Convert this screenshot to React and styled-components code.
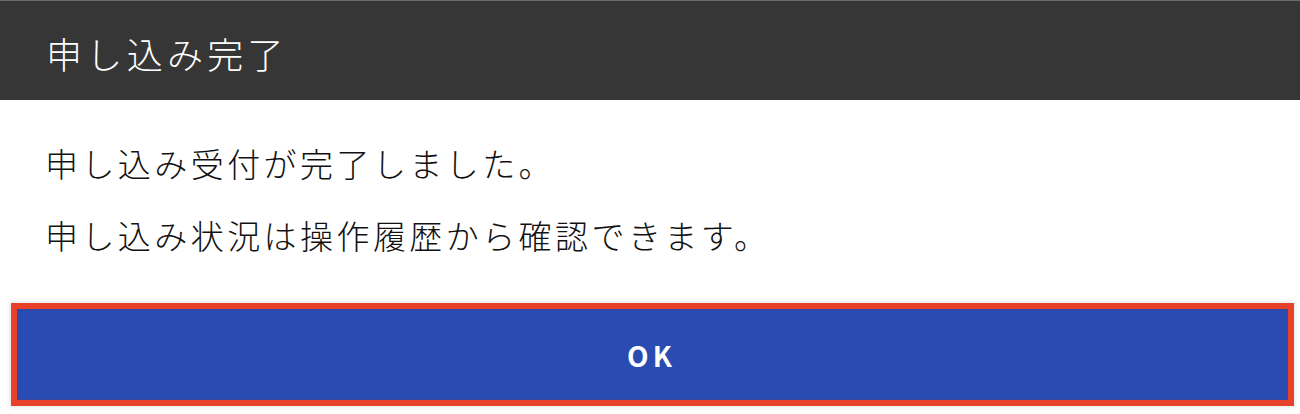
import React from 'react'
import styled, { createGlobalStyle } from 'styled-components'

const GlobalStyle = createGlobalStyle`
  html, body {
    margin: 0;
    padding: 0;
    background: #ffffff;
  }
  body {
    font-family: "Noto Sans CJK JP", "Noto Sans", sans-serif;
  }
`

const Dialog = styled.div`
  display: flex;
  flex-direction: column;
  width: 1300px;
  height: 414px;
  background: #ffffff;
  overflow: hidden;
`

const Header = styled.div`
  display: flex;
  align-items: center;
  height: 100px;
  box-sizing: border-box;
  padding: 4px 46px 0;
  background: #363636;
  border-top: 1px solid #6a6a6a;
`

const Title = styled.h1`
  margin: 0;
  font-size: 36px;
  font-weight: 300;
  letter-spacing: 0.12em;
  color: #ffffff;
`

const Body = styled.div`
  display: flex;
  flex-direction: column;
  padding: 27px 45px 0;
`

const Message = styled.p`
  margin: 0;
  font-size: 33px;
  font-weight: 300;
  line-height: 72px;
  letter-spacing: 0.104em;
  color: #111111;
`

const Actions = styled.div`
  display: flex;
  padding: 38px 12px 0 17px;
`

const OkButton = styled.button`
  flex: 1;
  height: 91px;
  border: 1px solid #3446a0;
  background: #2a4bb1;
  color: #ffffff;
  font-family: "Noto Sans CJK JP", "Noto Sans", sans-serif;
  font-size: 28px;
  font-weight: 700;
  letter-spacing: 0.15em;
  padding: 0 2px 0 0;
  cursor: pointer;
  box-shadow: 0 0 0 6px #e8412a, 0 0 5px 7px rgba(0, 0, 0, 0.12);
`

export default function App() {
  return (
    <>
      <GlobalStyle />
      <Dialog>
        <Header>
          <Title>申し込み完了</Title>
        </Header>
        <Body>
          <Message>申し込み受付が完了しました。</Message>
          <Message>申し込み状況は操作履歴から確認できます。</Message>
        </Body>
        <Actions>
          <OkButton type="button">OK</OkButton>
        </Actions>
      </Dialog>
    </>
  )
}
